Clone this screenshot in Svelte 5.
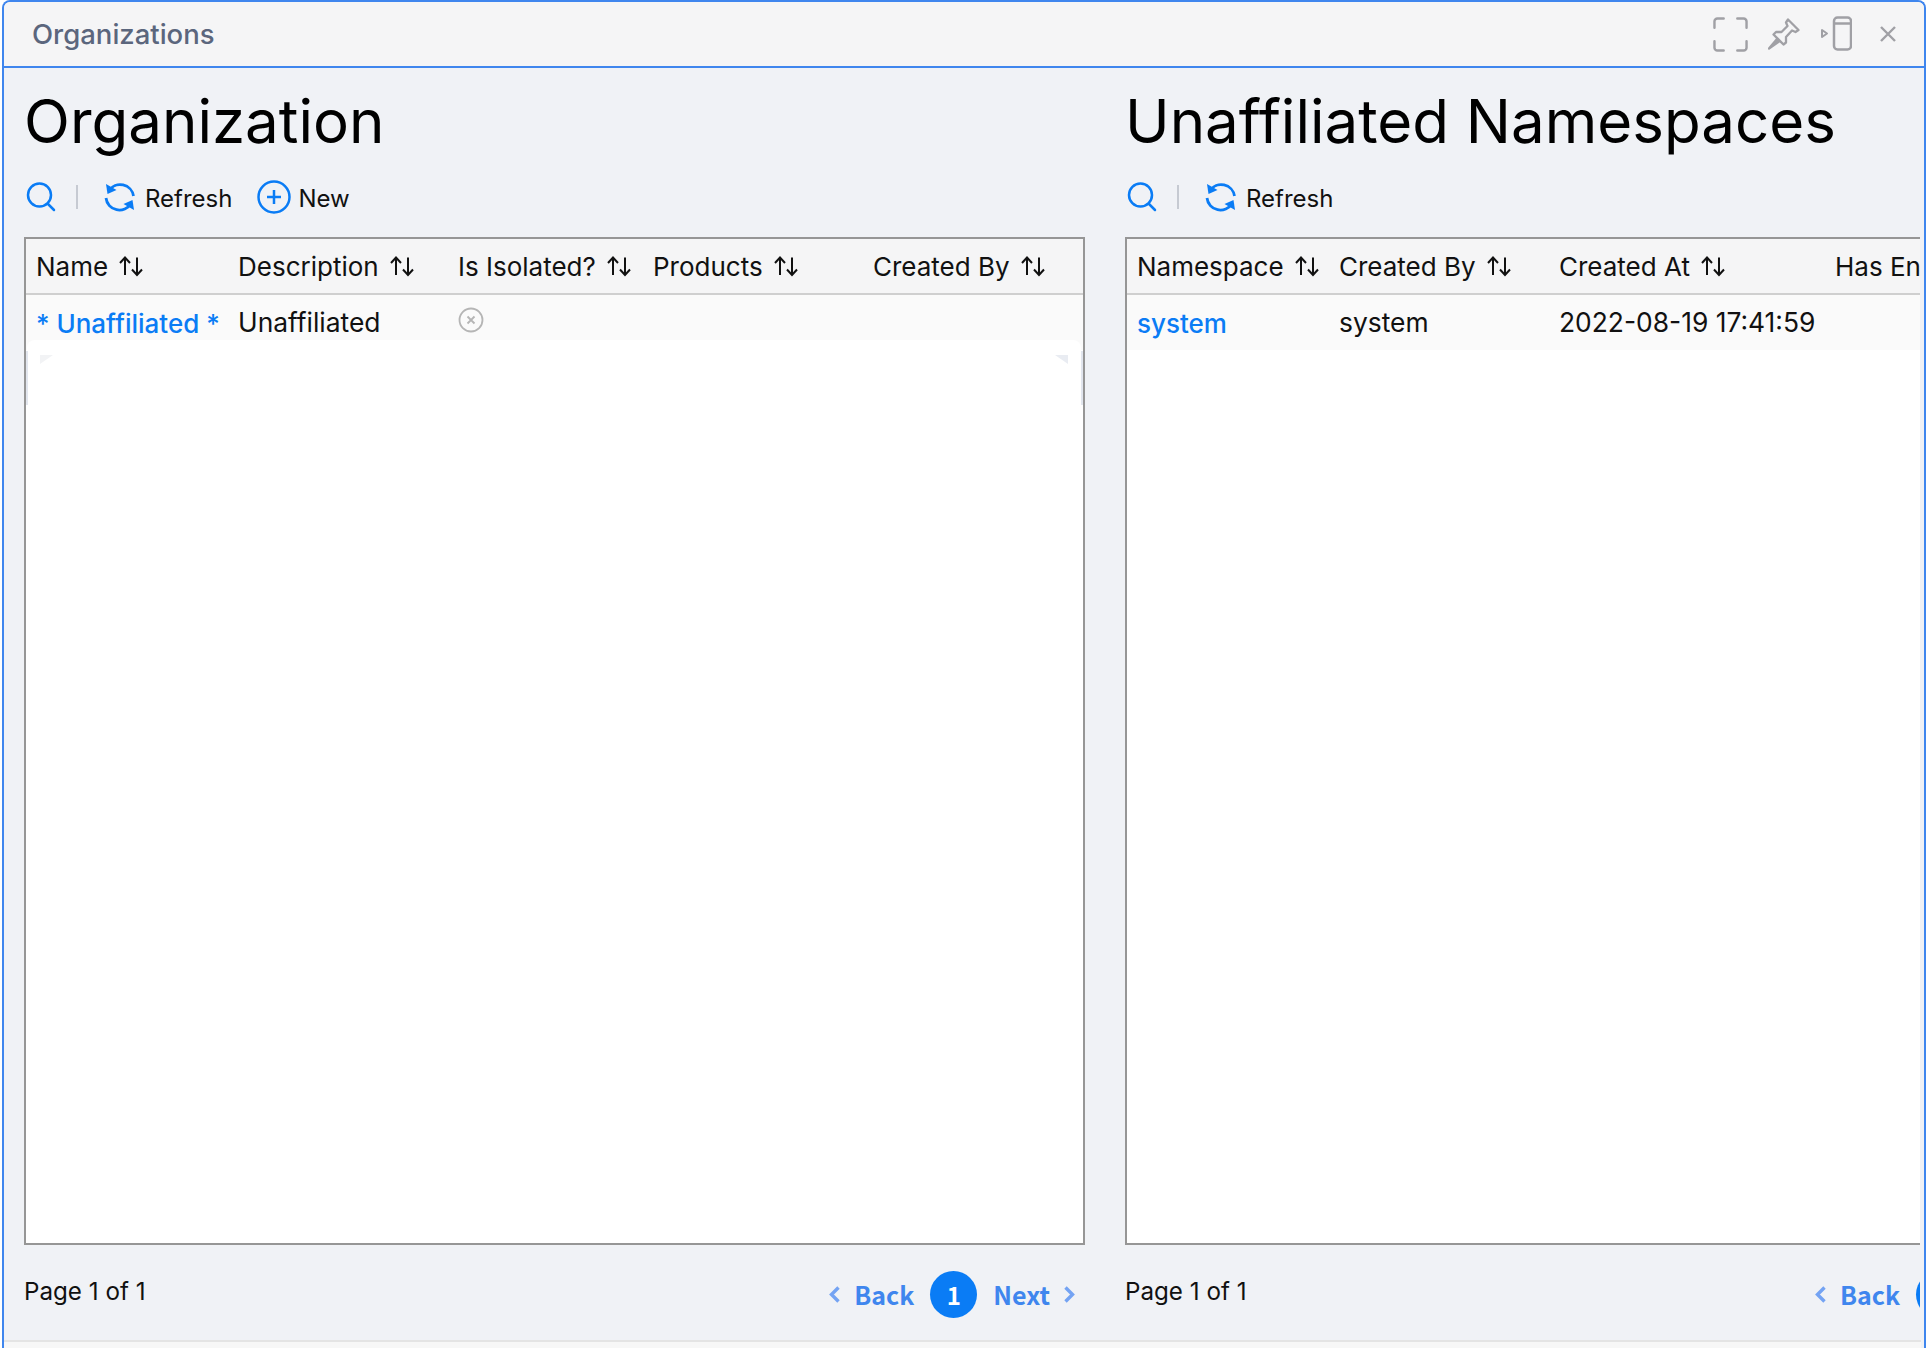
<script>
  const leftCols = [
    { name: 'Name', w: 202 },
    { name: 'Description', w: 220 },
    { name: 'Is Isolated?', w: 195 },
    { name: 'Products', w: 220 },
    { name: 'Created By', w: 0 }
  ];
  const rightCols = [
    { name: 'Namespace', w: 202 },
    { name: 'Created By', w: 220 },
    { name: 'Created At', w: 276 },
    { name: 'Has En', w: 0, clip: true }
  ];
</script>

{#snippet sort()}
  <svg class="sort" viewBox="0 0 24 22" width="24" height="22" fill="none" stroke="#111" stroke-width="2">
    <path d="M6 20V3M1 8L6 2.500L11 8" />
    <path d="M18 2.500v17M13 14.500L18 20L23 14.500" />
  </svg>
{/snippet}

{#snippet search()}
  <svg class="search" viewBox="0 0 30 30" width="30" height="30" fill="none" stroke="#0a7cf5" stroke-width="2.500">
    <circle cx="13.500" cy="13" r="11.500" />
    <path d="M22 22l6 6" stroke-linecap="round" />
  </svg>
{/snippet}

{#snippet refresh()}
  <svg class="refresh" viewBox="0 0 32 32" width="32" height="32" fill="none" stroke="#0a7cf5" stroke-width="2.800">
    <path d="M5 9.500A13.500 13.500 0 0 1 29.500 15" />
    <path d="M27 22.500A13.500 13.500 0 0 1 2 17" />
    <path d="M2 3L3.500 13L12.500 9Z" fill="#0a7cf5" stroke="none" />
    <path d="M30 29L28.500 19L19.500 23Z" fill="#0a7cf5" stroke="none" />
  </svg>
{/snippet}

{#snippet chevron(dir)}
  <svg class="chev" viewBox="0 0 11 17" width="11" height="17" fill="none" stroke="#74a3f3" stroke-width="3.400">
    {#if dir === 'l'}<path d="M9.500 1.500L2.500 8.500L9.500 15.500" />{:else}<path d="M1.500 1.500L8.500 8.500L1.500 15.500" />{/if}
  </svg>
{/snippet}

<div class="window">
  <header class="titlebar">
    <span class="title">Organizations</span>
    <div class="actions">
      <svg viewBox="0 0 36 36" width="35" height="35" fill="none" stroke="#a0a0a5" stroke-width="2.500" stroke-linecap="round">
        <path d="M1.500 11V4.500a3 3 0 0 1 3-3H11M25 1.500h6.500a3 3 0 0 1 3 3V11M34.500 25v6.500a3 3 0 0 1-3 3H25M11 34.500H4.500a3 3 0 0 1-3-3V25" />
      </svg>
      <svg viewBox="0 0 32 32" width="32" height="32" fill="none" stroke="#a0a0a5" stroke-width="2.300" stroke-linejoin="round">
        <path d="M20 1.500L30.500 12L27.500 14L24 12.500L18 19L18 24.500L15.500 26.500L5.500 16.500L8 14L13.500 14L19.500 8L18 4.500Z" />
        <path d="M9 21L1 30.500L11 23.500Z" fill="#a0a0a5" />
      </svg>
      <svg viewBox="0 0 32 36" width="32" height="36" fill="none" stroke="#a0a0a5" stroke-width="2.500">
        <rect x="14" y="1.500" width="17" height="32" rx="3.500" />
        <path d="M14 7.500H31" />
        <path d="M2 14v7l5-3.500Z" stroke-width="2" stroke-linejoin="round" />
      </svg>
      <svg class="close" viewBox="0 0 18 18" width="18" height="18" fill="none" stroke="#a0a0a5" stroke-width="2.400">
        <path d="M2 2L16 16M16 2L2 16" />
      </svg>
    </div>
  </header>

  <main class="panes">
    <section class="pane left">
      <h1>Organization</h1>
      <div class="toolbar">
        {@render search()}
        <span class="sep"></span>
        <button class="tool first">{@render refresh()}<span>Refresh</span></button>
        <button class="tool new">
          <svg viewBox="0 0 34 34" width="34" height="34" fill="none" stroke="#0a7cf5" stroke-width="2.500">
            <circle cx="17" cy="17" r="15.500" />
            <path d="M17 10v14M10 17h14" />
          </svg>
          <span>New</span>
        </button>
      </div>
      <div class="table org">
        <div class="row head">
          {#each leftCols as c}
            <div class="cell" style:width={c.w ? c.w + 'px' : null}>{c.name}{@render sort()}</div>
          {/each}
        </div>
        <div class="row body">
          <div class="cell link" style:width="202px">* Unaffiliated *</div>
          <div class="cell" style:width="220px">Unaffiliated</div>
          <div class="cell iso" style:width="195px">
            <svg viewBox="0 0 26 26" width="26" height="26" fill="none" stroke="#b5b5b5" stroke-width="1.800">
              <circle cx="13" cy="13" r="11.500" />
              <path d="M9.500 9.500l7 7M16.500 9.500l-7 7" />
            </svg>
          </div>
        </div>
        <div class="sheet">
          <span class="fold fold-l"></span>
          <span class="fold fold-r"></span>
        </div>
        <span class="strip strip-l"></span>
        <span class="strip strip-r"></span>
      </div>
      <footer class="pager">
        <span class="count">Page 1 of 1</span>
        <nav class="pages">
          {@render chevron('l')}
          <span class="pg back">Back</span>
          <span class="dot">1</span>
          <span class="pg next">Next</span>
          {@render chevron('r')}
        </nav>
      </footer>
    </section>

    <section class="pane right">
      <h1>Unaffiliated Namespaces</h1>
      <div class="toolbar">
        {@render search()}
        <span class="sep"></span>
        <button class="tool first">{@render refresh()}<span>Refresh</span></button>
      </div>
      <div class="table open">
        <div class="row head">
          {#each rightCols as c}
            <div class="cell" style:width={c.w ? c.w + 'px' : null}>{c.name}{#if !c.clip}{@render sort()}{/if}</div>
          {/each}
        </div>
        <div class="row body">
          <div class="cell link" style:width="202px">system</div>
          <div class="cell" style:width="220px">system</div>
          <div class="cell" style:width="276px">2022-08-19 17:41:59</div>
        </div>
      </div>
      <footer class="pager">
        <span class="count">Page 1 of 1</span>
        <nav class="pages clipped">
          {@render chevron('l')}
          <span class="pg back">Back</span>
          <span class="dot">1</span>
        </nav>
      </footer>
    </section>
  </main>
  <div class="bottom"></div>
</div>

<style>
  :global(body) {
    margin: 0;
    background: #fff;
  }
  .window {
    box-sizing: border-box;
    width: 1924px;
    height: 1348px;
    margin-left: 2px;
    border: 2px solid #3f86ee;
    border-bottom: 0;
    border-radius: 8px 8px 0 0;
    background: #f0f2f6;
    font-family: Inter, sans-serif;
    color: #111;
    overflow: hidden;
    display: flex;
    flex-direction: column;
  }
  .titlebar {
    height: 64px;
    flex: none;
    background: #f5f5f6;
    border-bottom: 2px solid #3f86ee;
    display: flex;
    align-items: center;
    justify-content: space-between;
    padding: 0 27px 0 28px;
  }
  .title {
    font-size: 27.500px;
    font-weight: 500;
    color: #5b667d;
  }
  .actions {
    display: flex;
    align-items: center;
    gap: 20px;
  }
  .close {
    margin-left: 7px;
  }
  .panes {
    flex: 1;
    display: flex;
    min-height: 0;
  }
  .pane {
    display: flex;
    flex-direction: column;
    min-width: 0;
  }
  .left {
    width: 1121px;
    flex: none;
    padding-left: 20px;
    box-sizing: border-box;
  }
  .right {
    width: 795px;
    flex: none;
    overflow: hidden;
  }
  h1 {
    margin: 26px 0 0;
    height: 54px;
    line-height: 54px;
    font-size: 60px;
    font-weight: 400;
    color: #000;
    white-space: nowrap;
  }
  .toolbar {
    margin-top: 29px;
    height: 40px;
    display: flex;
    align-items: center;
  }
  .search {
    margin-left: 2px;
  }
  .sep {
    width: 2px;
    height: 24px;
    background: #c6cad2;
    margin-left: 20px;
  }
  .tool {
    all: unset;
    display: flex;
    align-items: center;
    gap: 9px;
    font-size: 24px;
    color: #111;
    margin-left: 25px;
  }
  .tool.new {
    gap: 7px;
  }
  .tool span {
    padding-top: 2px;
  }
  .tool.first {
    margin-left: 26px;
  }
  .table {
    margin-top: 20px;
    height: 1008px;
    box-sizing: border-box;
    width: 1061px;
    border: 2px solid #969696;
    background: #fff;
    overflow: hidden;
  }
  .table.org {
    position: relative;
    overflow: visible;
  }
  .table.open {
    width: 100%;
    border-right: 0;
  }
  .row {
    display: flex;
    align-items: center;
    padding-left: 10px;
    white-space: nowrap;
  }
  .head {
    height: 54px;
    background: #f5f5f6;
    border-bottom: 2px solid #cfcfcf;
    font-size: 26px;
  }
  .body {
    height: 55px;
    box-sizing: border-box;
    padding-bottom: 2px;
    background: #fafafa;
    font-size: 26.400px;
  }
  .cell {
    flex: none;
    display: flex;
    align-items: center;
    box-sizing: border-box;
  }
  .sort {
    margin-left: 11px;
  }
  .link {
    color: #0a7cf5;
    font-weight: 500;
    font-size: 26px;
    padding-top: 4px;
  }
  .iso svg {
    margin-top: -4px;
  }
  .sheet {
    position: absolute;
    left: 1px;
    right: 2px;
    top: 101px;
    bottom: 0;
    background: #fff;
    border-radius: 8px 8px 0 0;
  }
  .fold {
    position: absolute;
    top: 15px;
    width: 13px;
    height: 9px;
    background: #e9ecf2;
  }
  .fold-l {
    left: 13px;
    clip-path: polygon(0 0, 100% 0, 0 100%);
    background: #f2f3f5;
  }
  .fold-r {
    right: 13px;
    clip-path: polygon(0 0, 100% 0, 100% 100%);
  }
  .strip {
    position: absolute;
    width: 2px;
    top: 112px;
    height: 54px;
    background: #e2e6ee;
  }
  .strip-l {
    left: 0;
  }
  .strip-r {
    right: 0;
  }
  .pager {
    height: 50px;
    margin-top: 23px;
    display: flex;
    align-items: center;
    justify-content: space-between;
    width: 1061px;
  }
  .right .pager {
    width: 100%;
  }
  .count {
    font-size: 24.200px;
    color: #111;
    margin-top: -4px;
  }
  .pages {
    display: flex;
    align-items: center;
    padding-right: 10px;
    margin-top: 2px;
    flex: none;
  }
  .pages.clipped {
    margin-right: -59px;
    padding-right: 0;
  }
  .pg {
    font-family: "Noto Sans CJK SC", "Noto Sans", sans-serif;
    font-weight: 700;
    font-size: 25px;
    color: #3f86ee;
  }
  .back {
    margin-left: 14px;
  }
  .dot {
    width: 47px;
    height: 47px;
    margin: 0 16px;
    border-radius: 50%;
    background: #0a7cf5;
    color: #fff;
    display: flex;
    align-items: center;
    justify-content: center;
    font-family: "Noto Sans CJK SC", "Noto Sans", sans-serif;
    font-weight: 700;
    font-size: 24px;
  }
  .next {
    margin-right: 14px;
  }
  .bottom {
    height: 6px;
    margin-right: 3px;
    background: #f7f7f7;
    border-top: 2px solid #e4e4e4;
    flex: none;
  }
</style>
